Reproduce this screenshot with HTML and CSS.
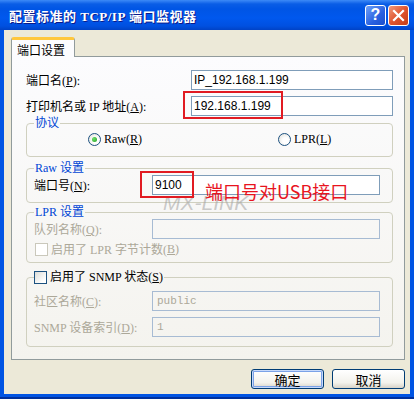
FILE: index.html
```html
<!DOCTYPE html>
<html lang="zh-CN">
<head>
  <meta charset="UTF-8" />
  <title>配置标准的 TCP/IP 端口监视器</title>
  <link rel="stylesheet" href="styles.css">
</head>
<body>
  <div class="window">
    <div class="titlebar">
      <span class="title">配置标准的 TCP/IP 端口监视器</span>
      <div class="caption-btns">
        <span class="cbtn help">?</span>
        <span class="cbtn close">
          <svg width="13" height="13" viewBox="0 0 13 13"><path d="M2 2 L11 11 M11 2 L2 11" stroke="#fff" stroke-width="2.2" stroke-linecap="square"/></svg>
        </span>
      </div>
    </div>

    <div class="client">
      <div class="tabs"><span class="tab">端口设置</span></div>

      <div class="panel">
        <div class="row">
          <span class="lbl">端口名(<u>P</u>):</span>
          <span class="field wide">IP_192.168.1.199</span>
        </div>
        <div class="row row2">
          <span class="lbl">打印机名或 IP 地址(<u>A</u>):</span>
          <span class="field wide">192.168.1.199</span>
        </div>

        <fieldset class="group g-proto">
          <legend>协议</legend>
          <div class="radios">
            <span class="opt first"><span class="radio on"></span>Raw(<u>R</u>)</span>
            <span class="opt"><span class="radio"></span>LPR(<u>L</u>)</span>
          </div>
        </fieldset>

        <fieldset class="group g-raw">
          <legend>Raw 设置</legend>
          <div class="row">
            <span class="lbl">端口号(<u>N</u>):</span>
            <span class="field">9100</span>
          </div>
        </fieldset>

        <fieldset class="group g-lpr">
          <legend>LPR 设置</legend>
          <div class="row">
            <span class="lbl off">队列名称(<u>Q</u>):</span>
            <span class="field dis"></span>
          </div>
          <div class="check-row off"><span class="check dis"></span>启用了 LPR 字节计数(<u>B</u>)</div>
        </fieldset>

        <fieldset class="group g-snmp">
          <legend><span class="check"></span>启用了 SNMP 状态(<u>S</u>)</legend>
          <div class="row">
            <span class="lbl off">社区名称(<u>C</u>):</span>
            <span class="field dis mono">public</span>
          </div>
          <div class="row row2">
            <span class="lbl off">SNMP 设备索引(<u>D</u>):</span>
            <span class="field dis mono">1</span>
          </div>
        </fieldset>
      </div>

      <div class="buttons">
        <span class="btn default">确定</span>
        <span class="btn">取消</span>
      </div>

      <span class="watermark">MX-LINK</span>
      <span class="redbox box-ip"></span>
      <span class="redbox box-port"></span>
      <span class="note">端口号对USB接口</span>
    </div>
  </div>
</body>
</html>
```

FILE: styles.css
```css
body { margin: 0; font-family: "Liberation Serif", "Noto Sans CJK SC", serif; font-size: 12px; color: #000; }
u { text-decoration: underline; }

.window { width: 414px; height: 399px; box-sizing: border-box; background: #0054e3; border-bottom: 2px solid #00309c; }
.titlebar { height: 30px; display: flex; align-items: center; justify-content: space-between; padding: 0 5px 0 9px;
  background: linear-gradient(#3d8af7 0, #0a5de6 4px, #0055e5 9px, #0058ee 18px, #0050e0 26px, #0042c6 30px); }
.title { color: #fff; font-family: "Liberation Serif", "Noto Sans CJK SC", serif; font-weight: bold; font-size: 13px; letter-spacing: 0.5px; text-shadow: 1px 1px #0a1a8a; }
.caption-btns { display: flex; gap: 2px; }
.cbtn { width: 21px; height: 21px; box-sizing: border-box; border: 1px solid #fff; border-radius: 3px; display: flex; align-items: center; justify-content: center; }
.help { background: linear-gradient(135deg, #6fa0f8, #2860e0 60%, #1c4fcc); color: #fff; font-family: "Liberation Sans", sans-serif; font-weight: bold; font-size: 16px; }
.close { background: linear-gradient(135deg, #f09a7c, #e0552f 50%, #c43d17); }

.client { position: relative; height: 364px; margin: 0 4px; padding: 7px 5px 0 7px; box-sizing: border-box; background: #ece9d8; }

.tabs { display: flex; height: 19px; position: relative; z-index: 1; }
.tab { width: 64px; height: 20px; box-sizing: border-box; padding: 3px 0 0 5px; background: #fcfcfe;
  border: 1px solid #919b9c; border-bottom: none; border-top: 3px solid #ffc73c; border-radius: 3px 3px 0 0; line-height: 14px;
  font-family: "Noto Sans CJK SC", sans-serif; }

.panel { height: 304px; box-sizing: border-box; border: 1px solid #919b9c; padding: 13px 11px 0 14px;
  background: linear-gradient(#fcfcfe, #f4f3ee); }

.row { display: flex; align-items: center; height: 20px; }
.row2 { margin-top: 6px; }
.lbl { white-space: nowrap; }
.off { color: #aca899; }
.field { margin-left: auto; width: 228px; height: 20px; box-sizing: border-box; border: 1px solid #7f9db9; background: #fff;
  padding: 0 0 0 2px; line-height: 18px; font-family: "Liberation Sans", sans-serif; font-size: 12px; }
.field.wide { width: 202px; }
.field.dis { background: transparent; border-color: #a7bbd3; color: #aca899; }
.mono { font-family: "Liberation Mono", monospace; font-size: 11px; padding-left: 4px; }

.group { margin: 0; padding: 0 12px 0 7px; border: 1px solid #d0d0bf; border-radius: 4px; }
.group legend { padding: 0 1px; height: 13px; line-height: 13px; color: #0046d5; display: flex; align-items: center; }
.g-proto { margin-top: 1px; padding-top: 1px; padding-bottom: 9px; }
.g-raw { margin-top: 5px; padding-bottom: 7px; }
.g-lpr { margin-top: 3px; padding-bottom: 6px; }
.g-snmp { margin-top: 8px; padding-top: 7px; padding-bottom: 9px; }
.g-snmp legend { color: #000; padding-left: 0; }

.radios { display: flex; height: 16px; align-items: center; padding-left: 54px; }
.opt { display: flex; align-items: center; }
.opt.first { width: 190px; }
.radio { width: 13px; height: 13px; box-sizing: border-box; border: 1px solid #1c5180; border-radius: 50%; margin-right: 3px;
  background: radial-gradient(circle at 60% 60%, #fff 30%, #dcdcd5); display: flex; align-items: center; justify-content: center; }
.radio.on::after { content: ""; width: 5px; height: 5px; border-radius: 50%; background: radial-gradient(circle at 35% 35%, #6cde6a, #21a121); }

.check-row { display: flex; align-items: center; height: 14px; margin: 3px 0 0 1px; }
.check { width: 13px; height: 13px; box-sizing: border-box; border: 1px solid #1c5180; margin-right: 3px;
  background: linear-gradient(135deg, #dcdcd7, #fff 80%); }
.check.dis { border-color: #cac8bb; background: #fff; }

.buttons { display: flex; justify-content: flex-end; gap: 8px; margin-top: 9px; }
.btn { width: 73px; height: 20px; box-sizing: border-box; border: 1px solid #003c74; border-radius: 3px; display: flex; align-items: center; justify-content: center;
  background: linear-gradient(#fff, #f3f2ec 70%, #d8d3c8); font-family: "Noto Sans CJK SC", sans-serif; font-size: 13px; }
.btn.default { box-shadow: inset 0 0 0 1px #c6d9fb, inset 0 0 0 2px #7ba2e7; }

.watermark { position: absolute; left: 159px; top: 165px; font-family: "Liberation Sans", sans-serif; font-style: italic; font-size: 21px; line-height: 16px; color: rgba(160, 160, 160, 0.55); }
.redbox { position: absolute; border: 2px solid #e11b22; box-sizing: border-box; }
.box-ip { left: 179px; top: 61px; width: 100px; height: 28px; }
.box-port { left: 136px; top: 141px; width: 54px; height: 27px; }
.note { position: absolute; left: 201px; top: 153px; font-family: "Noto Sans CJK SC", sans-serif; font-size: 18px; line-height: 16px; color: #e8141e; }
```
